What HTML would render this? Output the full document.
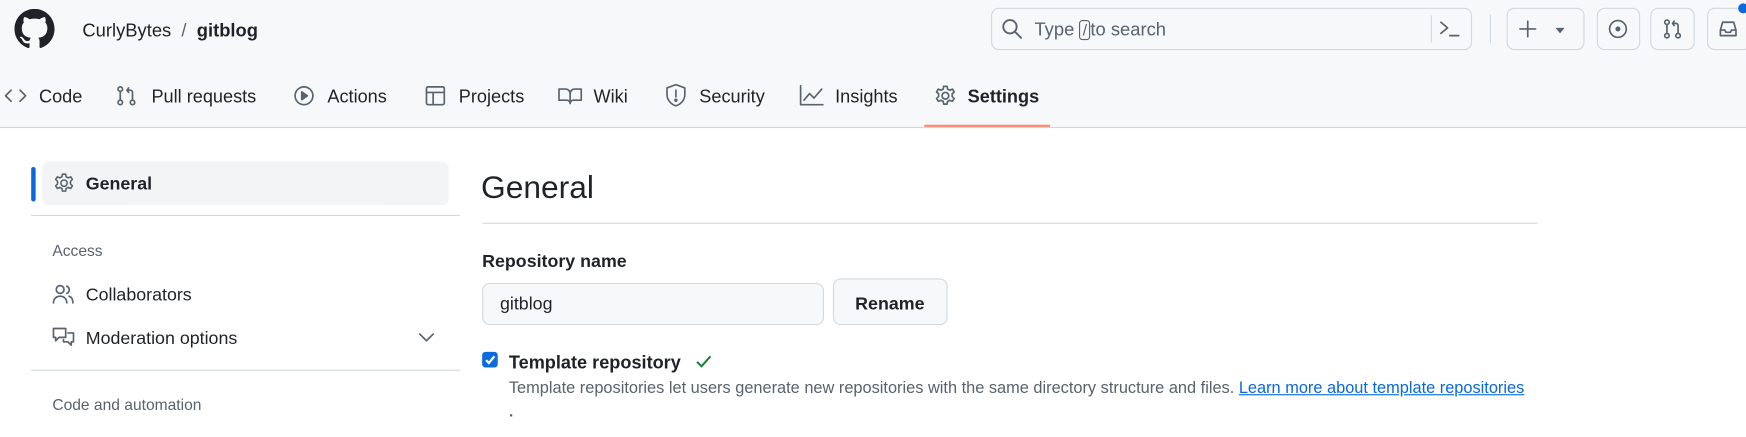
<!DOCTYPE html>
<html><head><meta charset="utf-8"><style>
html,body{margin:0;padding:0;width:1746px;height:436px;overflow:hidden;background:#fff}
#w{position:absolute;left:0;top:0;width:1568px;height:392px;transform:scale(1.11352);transform-origin:0 0;font-family:"Liberation Sans",sans-serif;color:#1f2328}
.a{position:absolute;white-space:nowrap}
.hdr{position:absolute;left:0;top:0;width:1568px;height:114px;background:#f6f8fa;border-bottom:1px solid #d1d9e0}
.nav{font-size:16.3px;top:77px;line-height:20px}
svg.i{position:absolute;fill:none;stroke:#59636e;stroke-width:1.5;stroke-linecap:round;stroke-linejoin:round}
.btn{position:absolute;border:1px solid #d1d9e0;border-radius:7px;background:#f6f8fa;box-sizing:border-box}
.sb{font-size:16px;line-height:20px}
</style></head><body><div id="w">
<div class="hdr"></div>
<svg class="a" style="left:13px;top:8px" width="36" height="36" viewBox="0 0 16 16"><path fill="#1f2328" d="M8 0C3.58 0 0 3.58 0 8c0 3.540 2.290 6.530 5.470 7.590.4.07.55-.17.55-.38 0-.19-.01-.82-.01-1.490-2.010.37-2.530-.49-2.690-.94-.09-.23-.48-.94-.82-1.130-.28-.15-.68-.52-.01-.53.63-.01 1.080.58 1.230.82.72 1.210 1.870.87 2.330.66.07-.52.28-.87.51-1.070-1.780-.2-3.640-.89-3.640-3.950 0-.87.31-1.590.82-2.150-.08-.2-.36-1.020.08-2.120 0 0 .67-.21 2.200.82.64-.18 1.320-.27 2-.27.68 0 1.360.09 2 .27 1.530-1.040 2.200-.82 2.200-.82.44 1.100.16 1.920.08 2.120.51.56.82 1.270.82 2.150 0 3.070-1.870 3.750-3.650 3.950.29.25.54.73.54 1.480 0 1.070-.01 1.930-.01 2.200 0 .21.15.46.55.38A8.013 8.013 0 0016 8c0-4.420-3.580-8-8-8z"/></svg>
<div class="a" style="left:74px;top:19px;font-size:16.5px">CurlyBytes&nbsp;&nbsp;<span style="color:#59636e">/</span>&nbsp;&nbsp;<b>gitblog</b></div>
<div class="btn" style="left:890px;top:7px;width:432px;height:38px;background:#f6f8fa"></div>
<svg class="i" style="left:899px;top:16px;stroke:#59636e;stroke-width:1.7" width="20" height="20" viewBox="0 0 20 20"><circle cx="8" cy="8" r="6"/><path d="M12.5 12.5L18 18"/></svg>
<div class="a" style="left:929px;top:18px;font-size:16.5px;color:#59636e">Type <span style="border:1px solid #59636e;border-radius:3px;padding:0 2px;font-size:14px">/</span>to search</div>
<div class="a" style="left:1285px;top:14px;width:1px;height:24px;background:#d1d9e0"></div>
<svg class="i" style="left:1292px;top:17px" width="20" height="18" viewBox="0 0 20 18"><path d="M2 3l6 5-6 5M10 15h8"/></svg>
<div class="a" style="left:1338px;top:13px;width:1px;height:26px;background:#d1d9e0"></div>
<div class="btn" style="left:1353px;top:7px;width:70px;height:38px"></div>
<svg class="i" style="left:1364px;top:18px" width="16" height="16" viewBox="0 0 16 16"><path d="M8 1v14M1 8h14"/></svg>
<div class="a" style="left:1397px;top:25px;width:0;height:0;border-left:4px solid transparent;border-right:4px solid transparent;border-top:5px solid #59636e"></div>
<div class="btn" style="left:1434px;top:7px;width:39px;height:38px"></div>
<svg class="i" style="left:1443px;top:16px" width="20" height="20" viewBox="0 0 20 20"><circle cx="10" cy="10" r="7.5"/><circle cx="10" cy="10" r="1.5" fill="#59636e"/></svg>
<div class="btn" style="left:1482px;top:7px;width:40px;height:38px"></div>
<svg class="i" style="left:1492px;top:16px" width="20" height="20" viewBox="0 0 20 20"><circle cx="5" cy="4" r="2"/><circle cx="5" cy="16" r="2"/><path d="M5 6v8"/><circle cx="15" cy="16" r="2"/><path d="M15 14V7a2 2 0 00-2-2h-3M11.5 3L10 5l1.5 2"/></svg>
<div class="btn" style="left:1533px;top:7px;width:40px;height:38px"></div>
<svg class="i" style="left:1542px;top:16px" width="20" height="20" viewBox="0 0 20 20"><path d="M3 11l2-7h10l2 7v5H3zM3 11h4l1 2h4l1-2h4"/></svg>
<div class="a" style="left:1561px;top:3px;width:9px;height:9px;border-radius:50%;background:#0969da"></div>
<!-- nav -->
<svg class="i" style="left:4px;top:78px" width="20" height="16" viewBox="0 0 20 16"><path d="M6 3L1 8l5 5M14 3l5 5-5 5"/></svg>
<div class="a nav" style="left:35px">Code</div>
<svg class="i" style="left:104px;top:76px" width="20" height="20" viewBox="0 0 20 20"><circle cx="4" cy="4" r="2"/><circle cx="4" cy="16" r="2"/><path d="M4 6v8"/><circle cx="15" cy="16" r="2"/><path d="M15 14V7a2 2 0 00-2-2h-3M11.5 3L10 5l1.5 2"/></svg>
<div class="a nav" style="left:136px">Pull requests</div>
<svg class="i" style="left:263px;top:76px" width="20" height="20" viewBox="0 0 20 20"><circle cx="10" cy="10" r="8"/><path d="M8 6.5v7l5-3.5z" fill="#59636e"/></svg>
<div class="a nav" style="left:294px">Actions</div>
<svg class="i" style="left:381px;top:76px" width="20" height="20" viewBox="0 0 20 20"><rect x="2" y="2" width="16" height="16" rx="1.5"/><path d="M2 7h16M8 7v11"/></svg>
<div class="a nav" style="left:412px">Projects</div>
<svg class="i" style="left:501px;top:76px" width="22" height="20" viewBox="0 0 22 20"><path d="M1 4h6a4 4 0 014 4v9a3 3 0 00-3-3H1zM21 4h-6a4 4 0 00-4 4v9a3 3 0 013-3h7z"/></svg>
<div class="a nav" style="left:533px">Wiki</div>
<svg class="i" style="left:597px;top:75px" width="20" height="22" viewBox="0 0 20 22"><path d="M10 1l8 3v6c0 5-4 9-8 10-4-1-8-5-8-10V4z"/><path d="M10 6v6" /><circle cx="10" cy="15" r=".8" fill="#59636e"/></svg>
<div class="a nav" style="left:628px">Security</div>
<svg class="i" style="left:718px;top:76px" width="22" height="20" viewBox="0 0 22 20"><path d="M1 1v17h20M4 14l5-6 4 4 7-8"/></svg>
<div class="a nav" style="left:750px">Insights</div>
<svg class="i" style="left:839px;top:76px" width="20" height="20" viewBox="0 0 20 20"><circle cx="10" cy="10" r="3"/><path d="M8.5 1.5h3l.5 2.5 2 1 2.3-1 1.6 2.5-1.8 1.8v2.4l1.8 1.8-1.6 2.5-2.3-1-2 1-.5 2.5h-3l-.5-2.5-2-1-2.3 1-1.6-2.5 1.8-1.8V8.3L2.1 6.5 3.7 4l2.3 1 2-1z"/></svg>
<div class="a nav" style="left:869px;font-weight:bold">Settings</div>
<div class="a" style="left:830px;top:112px;width:113px;height:2px;background:#fd8c73"></div>
<!-- sidebar -->
<div class="a" style="left:28px;top:150px;width:4px;height:31px;border-radius:3px;background:#0969da"></div>
<div class="a" style="left:38px;top:145px;width:365px;height:39px;border-radius:6px;background:#f2f4f6"></div>
<svg class="i" style="left:48px;top:155px" width="19" height="19" viewBox="0 0 20 20"><circle cx="10" cy="10" r="3"/><path d="M8.5 1.5h3l.5 2.5 2 1 2.3-1 1.6 2.5-1.8 1.8v2.4l1.8 1.8-1.6 2.5-2.3-1-2 1-.5 2.5h-3l-.5-2.5-2-1-2.3 1-1.6-2.5 1.8-1.8V8.3L2.1 6.5 3.7 4l2.3 1 2-1z"/></svg>
<div class="a sb" style="left:77px;top:156px;font-weight:bold">General</div>
<div class="a" style="left:28px;top:193px;width:385px;height:1px;background:#d1d9e0"></div>
<div class="a" style="left:47px;top:217px;font-size:14px;color:#59636e">Access</div>
<svg class="i" style="left:47px;top:254px" width="20" height="20" viewBox="0 0 20 20"><circle cx="7" cy="6" r="3.5"/><path d="M1 18c0-4 3-6 6-6s6 2 6 6M13 3a3.5 3.5 0 010 6.5M15 12c2 .7 3.5 2.7 3.5 6"/></svg>
<div class="a sb" style="left:77px;top:256px">Collaborators</div>
<svg class="i" style="left:47px;top:293px" width="20" height="20" viewBox="0 0 20 20"><path d="M1 2h11v8H6l-3 3v-3H1zM14 6h5v8h-2v3l-3-3h-4v-2"/></svg>
<div class="a sb" style="left:77px;top:295px">Moderation options</div>
<svg class="i" style="left:376px;top:297px" width="14" height="12" viewBox="0 0 14 12"><path d="M1 3l6 6 6-6"/></svg>
<div class="a" style="left:28px;top:332px;width:385px;height:1px;background:#d1d9e0"></div>
<div class="a" style="left:47px;top:355px;font-size:14px;color:#59636e">Code and automation</div>
<!-- main -->
<div class="a" style="left:432px;top:153px;font-size:28.5px">General</div>
<div class="a" style="left:433px;top:200px;width:948px;height:1px;background:#d1d9e0"></div>
<div class="a" style="left:433px;top:227px;font-size:16px;font-weight:bold">Repository name</div>
<div class="btn" style="left:433px;top:254px;width:307px;height:38px;background:#f6f8fa"></div>
<div class="a" style="left:449px;top:265px;font-size:16px">gitblog</div>
<div class="btn" style="left:748px;top:250px;width:103px;height:42px"></div>
<div class="a" style="left:768px;top:265px;font-size:16px;font-weight:bold">Rename</div>
<div class="a" style="left:433px;top:316px;width:14px;height:14px;border-radius:3px;background:#0b6bdc"></div>
<svg class="a" style="left:433px;top:316px" width="14" height="14" viewBox="0 0 14 14"><path d="M3.5 7.5l2.5 2.5 5-6" stroke="#fff" stroke-width="2" fill="none"/></svg>
<div class="a" style="left:457px;top:317px;font-size:16.3px;font-weight:bold">Template repository</div>
<svg class="a" style="left:624px;top:318px" width="16" height="14" viewBox="0 0 16 14"><path d="M2 7l4 4 8-9" stroke="#1a7f37" stroke-width="1.8" fill="none"/></svg>
<div class="a" style="left:457px;top:341px;font-size:14.7px;color:#59636e">Template repositories let users generate new repositories with the same directory structure and files. <span style="color:#0969da;text-decoration:underline">Learn more about template repositories</span></div>
<div class="a" style="left:458px;top:372px;width:2px;height:2px;background:#59636e"></div>
</div></body></html>
